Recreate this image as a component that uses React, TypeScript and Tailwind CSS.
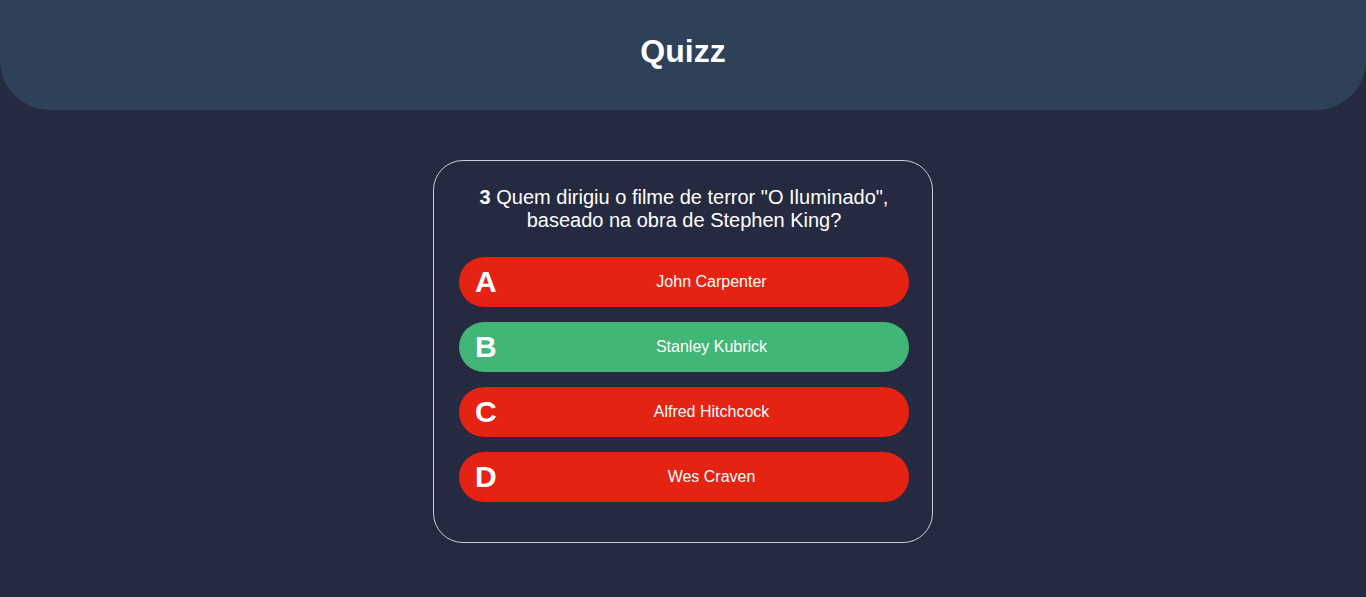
import React from "react";

type Option = {
  letter: string;
  text: string;
  correct: boolean;
};

const options: Option[] = [
  { letter: "A", text: "John Carpenter", correct: false },
  { letter: "B", text: "Stanley Kubrick", correct: true },
  { letter: "C", text: "Alfred Hitchcock", correct: false },
  { letter: "D", text: "Wes Craven", correct: false },
];

const App = () => {
  return (
    <div
      className="min-h-[597px] bg-[#252a40] text-white"
      style={{ fontFamily: '"Liberation Sans", Arial, sans-serif' }}
    >
      <header className="h-[110px] bg-[#2e4159] rounded-b-[50px] flex items-center justify-center">
        <h1 className="text-[32px] font-bold leading-none -mt-[8px]">Quizz</h1>
      </header>

      <main className="flex justify-center pt-[50px]">
        <div className="w-[500px] border border-[#c9ced8] rounded-[30px] pl-[25px] pr-[23px] pt-[25px] pb-[40px]">
          <p className="text-center text-[20px] leading-[23px] px-[10px]">
            <span className="font-bold">3</span> Quem dirigiu o filme de terror
            "O Iluminado", baseado na obra de Stephen King?
          </p>

          <div className="flex flex-col gap-[15px] mt-[25px]">
            {options.map((opt) => (
              <button
                key={opt.letter}
                className={
                  "h-[50px] w-full rounded-full flex items-center pl-[16px] pr-[16px] " +
                  (opt.correct ? "bg-[#41b677]" : "bg-[#e52312]")
                }
              >
                <span className="w-[55px] text-left text-[30px] font-bold leading-none">
                  {opt.letter}
                </span>
                <span className="flex-1 text-center text-[16px]">{opt.text}</span>
              </button>
            ))}
          </div>
        </div>
      </main>
    </div>
  );
};

export default App;
